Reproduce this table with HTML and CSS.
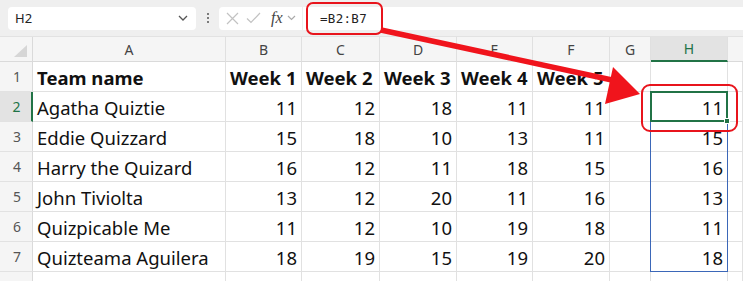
FILE: index.html
```html
<!DOCTYPE html>
<html>
<head>
<meta charset="utf-8">
<link rel="stylesheet" href="styles.css">
</head>
<body>
<div class="app">
  <div class="toolbar">
    <div class="namebox">
      <span class="name">H2</span>
      <svg class="chev" width="10" height="6" viewBox="0 0 10 6"><path d="M1 1 L5 5 L9 1" fill="none" stroke="#555" stroke-width="1.3"/></svg>
    </div>
    <div class="dots"><span></span><span></span><span></span></div>
    <div class="fxbox">
      <svg width="13" height="13" viewBox="0 0 13 13" class="ico-x"><path d="M1 1 L12 12 M12 1 L1 12" stroke="#c2c2c2" stroke-width="1.2" fill="none"/></svg>
      <svg width="15" height="12" viewBox="0 0 15 12" class="ico-check"><path d="M1 6.5 L5 10.5 L14 1" stroke="#c2c2c2" stroke-width="1.2" fill="none"/></svg>
      <span class="fx">fx</span>
      <svg class="chev small" width="9" height="6" viewBox="0 0 9 6"><path d="M1 1 L4.5 4.5 L8 1" fill="none" stroke="#aaa" stroke-width="1.2"/></svg>
    </div>
    <div class="formula"><span class="ftext">=B2:B7</span></div>
  </div>

  <div class="sheet">
    <div class="corner"><svg width="13" height="12" viewBox="0 0 13 12"><path d="M13 0 L13 12 L0 12 Z" fill="#d6d6d6"/></svg></div>
    <div class="ch">A</div><div class="ch">B</div><div class="ch">C</div><div class="ch">D</div><div class="ch">E</div><div class="ch">F</div><div class="ch">G</div><div class="ch sel">H</div><div class="ch last"></div>

    <div class="rh">1</div>
    <div class="c t b">Team name</div><div class="c b">Week 1</div><div class="c b">Week 2</div><div class="c b">Week 3</div><div class="c b">Week 4</div><div class="c b">Week 5</div><div class="c"></div><div class="c"></div><div class="c"></div>

    <div class="rh sel">2</div>
    <div class="c t">Agatha Quiztie</div><div class="c n">11</div><div class="c n">12</div><div class="c n">18</div><div class="c n">11</div><div class="c n">11</div><div class="c"></div><div class="c n">11</div><div class="c"></div>

    <div class="rh">3</div>
    <div class="c t">Eddie Quizzard</div><div class="c n">15</div><div class="c n">18</div><div class="c n">10</div><div class="c n">13</div><div class="c n">11</div><div class="c"></div><div class="c n">15</div><div class="c"></div>

    <div class="rh">4</div>
    <div class="c t">Harry the Quizard</div><div class="c n">16</div><div class="c n">12</div><div class="c n">11</div><div class="c n">18</div><div class="c n">15</div><div class="c"></div><div class="c n">16</div><div class="c"></div>

    <div class="rh">5</div>
    <div class="c t">John Tiviolta</div><div class="c n">13</div><div class="c n">12</div><div class="c n">20</div><div class="c n">11</div><div class="c n">16</div><div class="c"></div><div class="c n">13</div><div class="c"></div>

    <div class="rh">6</div>
    <div class="c t">Quizpicable Me</div><div class="c n">11</div><div class="c n">12</div><div class="c n">10</div><div class="c n">19</div><div class="c n">18</div><div class="c"></div><div class="c n">11</div><div class="c"></div>

    <div class="rh">7</div>
    <div class="c t">Quizteama Aguilera</div><div class="c n">18</div><div class="c n">19</div><div class="c n">15</div><div class="c n">19</div><div class="c n">20</div><div class="c"></div><div class="c n">18</div><div class="c"></div>

    <div class="rh"></div>
    <div class="c"></div><div class="c"></div><div class="c"></div><div class="c"></div><div class="c"></div><div class="c"></div><div class="c"></div><div class="c"></div><div class="c"></div>

    <div class="range"></div>
    <div class="active"><span class="handle"></span></div>
  </div>

  <svg class="annot" width="743" height="281" viewBox="0 0 743 281">
    <rect x="307" y="3" width="75" height="31" rx="6" ry="6" fill="none" stroke="#e8141c" stroke-width="2"/>
    <rect x="642" y="85" width="95" height="46" rx="8" ry="8" fill="none" stroke="#e8141c" stroke-width="2"/>
    <path d="M381 30 L612 80" stroke="#f0141c" stroke-width="5.5" fill="none"/>
    <path d="M640 94 L613 67 L605 104 Z" fill="#f0141c"/>
  </svg>
</div>
</body>
</html>
```

FILE: styles.css
```css
* { box-sizing: border-box; }
html, body { margin: 0; padding: 0; background: #fff; }
.app {
  position: relative;
  width: 743px;
  height: 281px;
  overflow: hidden;
  font-family: "Noto Sans", "Open Sans", sans-serif;
}
.toolbar {
  display: flex;
  align-items: center;
  height: 37px;
  padding: 0 0 0 8px;
  background: #efefef;
  border-bottom: 1px solid #e2e2e2;
}
.namebox {
  width: 188px;
  height: 23px;
  background: #fff;
  border-radius: 4px;
  display: flex;
  align-items: center;
  justify-content: space-between;
  padding: 0 8px 0 7px;
}
.name { font-size: 13px; color: #222; font-family: "Noto Sans", sans-serif; }
.dots {
  width: 23px;
  display: flex;
  flex-direction: column;
  align-items: center;
  gap: 2px;
}
.dots span { width: 2px; height: 2px; background: #555; border-radius: 1px; }
.fxbox {
  width: 83px;
  height: 23px;
  background: #fff;
  border-radius: 4px 0 0 4px;
  display: flex;
  align-items: center;
  padding-left: 7px;
  gap: 0;
}
.ico-x { margin-right: 7px; }
.ico-check { margin-right: 10px; }
.fx {
  font-family: "Liberation Serif", serif;
  font-style: italic;
  font-size: 16px;
  color: #444;
  margin-right: 4px;
  line-height: 1;
}
.formula {
  flex: 1;
  height: 23px;
  background: #fff;
  margin-left: 1px;
  display: flex;
  align-items: center;
  padding-left: 17px;
}
.ftext {
  font-family: "DejaVu Sans Mono", monospace;
  font-size: 12.5px;
  color: #222;
  letter-spacing: 0.3px;
}
.sheet {
  position: relative;
  display: grid;
  grid-template-columns: 33px 193px 76px 78px 77px 76px 77px 41px 77px 1fr;
  grid-template-rows: 25px repeat(8, 30px);
}
.corner {
  background: #f5f5f5;
  border-right: 1px solid #dadada;
  border-bottom: 1px solid #dadada;
  display: flex;
  align-items: flex-end;
  justify-content: flex-end;
  padding: 0 5px 4px 0;
}
.ch {
  background: #f5f5f5;
  border-right: 1px solid #e0e0e0;
  border-bottom: 1px solid #dadada;
  font-size: 14px;
  color: #444;
  display: flex;
  align-items: center;
  justify-content: center;
}
.ch.sel {
  background: #e3e3e3;
  border-bottom: 2px solid #217346;
  color: #217346;
}
.ch.last { border-right: none; }
.rh {
  background: #f5f5f5;
  border-right: 1px solid #dadada;
  border-bottom: 1px solid #e2e2e2;
  font-size: 14px;
  color: #555;
  display: flex;
  align-items: center;
  justify-content: center;
  padding-left: 2px;
}
.rh.sel {
  background: #e3e3e3;
  color: #217346;
  border-right: 2px solid #217346;
}
.c {
  border-right: 1px solid #e1e1e1;
  border-bottom: 1px solid #e1e1e1;
  font-size: 18.5px;
  color: #111;
  display: flex;
  align-items: center;
  padding: 0 4px;
  white-space: nowrap;
  overflow: visible;
  padding-top: 1px;
}
.c.b { font-weight: bold; }
.c.n { justify-content: flex-end; }
.range {
  position: absolute;
  grid-column: 9 / 10;
  grid-row: 3 / 9;
  top: 0;
  bottom: 0;
  left: -1px;
  right: 0;
  border: 1px solid #3b67b8;
  pointer-events: none;
}
.active {
  position: absolute;
  grid-column: 9 / 10;
  grid-row: 3 / 4;
  top: -1px;
  bottom: 0;
  left: -1px;
  right: 0;
  border: 2px solid #217346;
  pointer-events: none;
}
.handle {
  position: absolute;
  right: -4px;
  bottom: -4px;
  width: 6px;
  height: 6px;
  background: #217346;
  border: 1px solid #fff;
}
.annot {
  position: absolute;
  left: 0;
  top: 0;
  pointer-events: none;
}
```
